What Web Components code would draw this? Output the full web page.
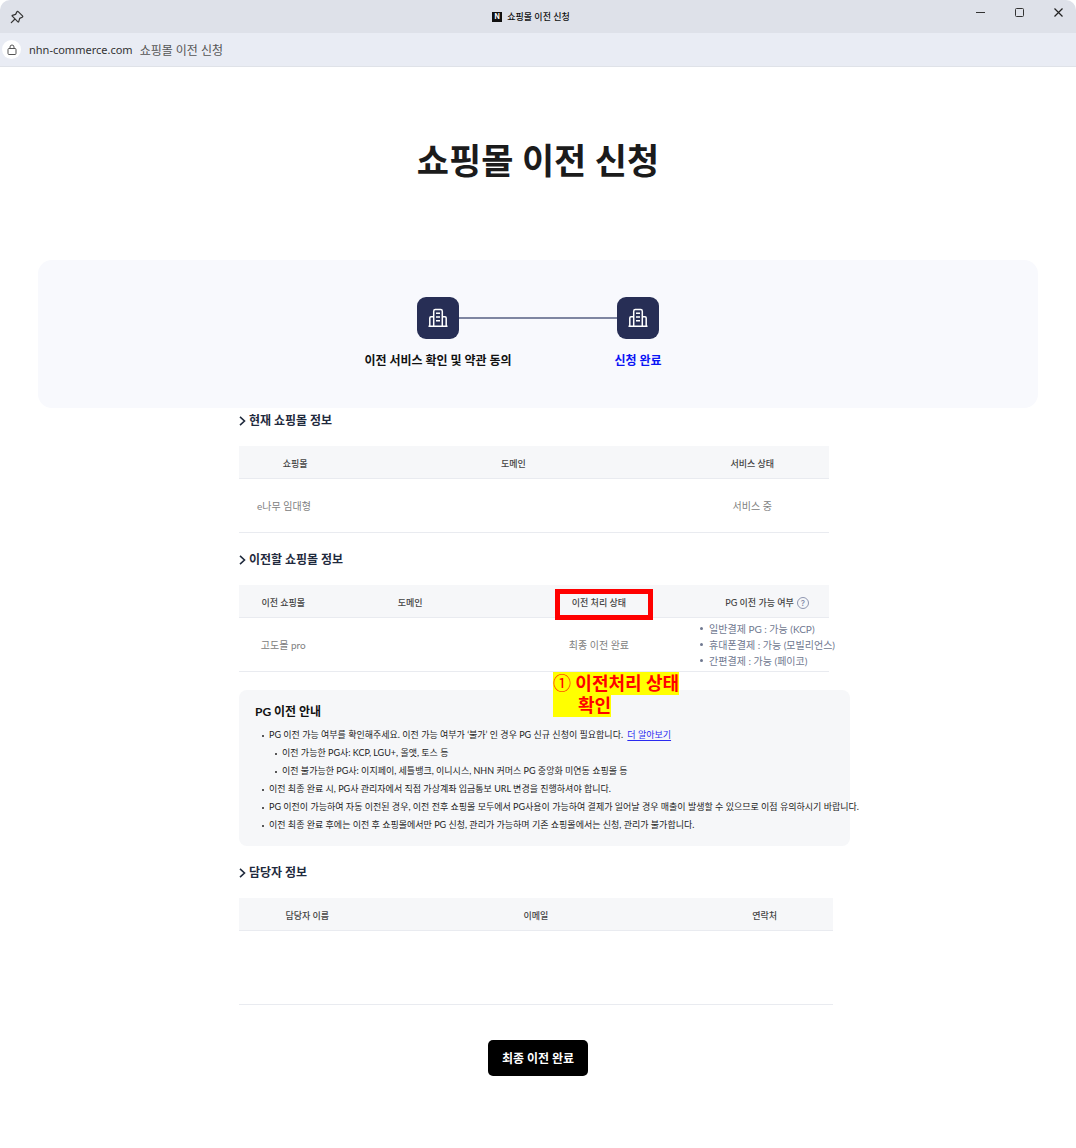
<!DOCTYPE html>
<html lang="ko">
<head>
  <meta charset="UTF-8">
  <meta name="viewport" content="width=device-width, initial-scale=1.0">
  <title>쇼핑몰 이전 신청</title>
  <style>
    body {
      margin: 0;
      background: #fff;
      color: #111;
      font-family: Lato, "Noto Sans CJK KR", sans-serif;
    }

    main {
      padding: 0 38px 72px;
    }

    h1 {
      margin: 0;
      padding: 66px 0 73px;
      font-size: 35px;
      line-height: 54px;
      font-weight: 700;
      text-align: center;
      color: #1b1b1b;
    }

    .content {
      max-width: 598px;
      margin: 0 auto;
    }
  </style>
</head>
<body>
  <window-bar>쇼핑몰 이전 신청</window-bar>
  <address-bar host="nhn-commerce.com">쇼핑몰 이전 신청</address-bar>

  <main>
    <h1>쇼핑몰 이전 신청</h1>

    <step-list>
      <step-item>이전 서비스 확인 및 약관 동의</step-item>
      <step-item current>신청 완료</step-item>
    </step-list>

    <div class="content">
      <info-section heading="현재 쇼핑몰 정보">
        <info-table lead widths="19,55,26" heads="쇼핑몰,도메인,서비스 상태" cells="e나무 임대형,,서비스 중"></info-table>
      </info-section>

      <info-section heading="이전할 쇼핑몰 정보">
        <info-table widths="15,28,36,21" heads="이전 쇼핑몰,도메인,이전 처리 상태,PG 이전 가능 여부" cells="고도몰 pro,,최종 이전 완료,">
          <help-button slot="head-4"></help-button>
          <pg-list slot="cell-4" items="일반결제 PG : 가능 (KCP)|휴대폰결제 : 가능 (모빌리언스)|간편결제 : 가능 (페이코)"></pg-list>
        </info-table>
        <check-mark number="①" first="이전처리 상태" second="확인"></check-mark>
      </info-section>

      <pg-notice></pg-notice>

      <info-section heading="담당자 정보">
        <info-table wide widths="23,54,23" heads="담당자 이름,이메일,연락처" cells=",,"></info-table>
      </info-section>

      <submit-button>최종 이전 완료</submit-button>
    </div>
  </main>

  <script>
    // Base class: every element clones its template in an open shadow root
    class BaseElement extends HTMLElement {
      constructor() {
        super();
        this.attachShadow({ mode: "open" });
      }

      render() {
        const template = document.createElement("template");
        template.innerHTML = `
          ${this.getStyles()}
          ${this.getTemplate()}
        `;
        this.shadowRoot.replaceChildren(template.content.cloneNode(true));
      }

      connectedCallback() {
        this.render();
      }
    }

    class WindowBar extends BaseElement {
      getTemplate() {
        return `
          <button class="pin" aria-label="고정">
            <svg width="16" height="16" viewBox="0 0 16 16" fill="none" stroke="#333" stroke-width="1.2" stroke-linejoin="round" stroke-linecap="round">
              <path d="M9.2 2.6 13.5 6.9Q14.2 7.7 13.2 8.2L10.7 9.4 9.7 12.7Q9.4 13.3 8.9 12.8L3.3 7.2Q2.8 6.7 3.4 6.4L6.6 5.4 7.9 2.9Q8.5 1.9 9.2 2.6ZM6 10 2.3 13.7"/>
            </svg>
          </button>
          <div class="title">
            <span class="logo">N</span>
            <span><slot></slot></span>
          </div>
          <div class="controls">
            <button aria-label="최소화"><svg width="11" height="11" viewBox="0 0 11 11" fill="none" stroke="#333"><path d="M1 5.5h9"/></svg></button>
            <button aria-label="최대화"><svg width="11" height="11" viewBox="0 0 11 11" fill="none" stroke="#333"><rect x="1.5" y="1.5" width="8" height="8" rx="1"/></svg></button>
            <button aria-label="닫기"><svg width="11" height="11" viewBox="0 0 11 11" fill="none" stroke="#222" stroke-width="1.2"><path d="M1.5 1.5l8 8M9.5 1.5l-8 8"/></svg></button>
          </div>
        `;
      }

      getStyles() {
        return `
          <style>
            :host {
              display: grid;
              grid-template-columns: 1fr auto 1fr;
              align-items: center;
              height: 33px;
              background: #dee1e9;
              border-radius: 10px 10px 0 0;
            }
            button {
              display: flex;
              padding: 0;
              border: 0;
              background: none;
            }
            .pin {
              margin-left: 9px;
              justify-self: start;
            }
            .title {
              display: flex;
              align-items: center;
              gap: 5px;
              padding-right: 14px;
              font-size: 9px;
              line-height: 14px;
              font-weight: 500;
            }
            .logo {
              width: 10px;
              height: 10px;
              background: #111;
              color: #fff;
              font: 700 7px/10px Inter, sans-serif;
              text-align: center;
            }
            .controls {
              display: flex;
              gap: 28px;
              justify-self: end;
              padding: 0 12px 8px 0;
            }
          </style>
        `;
      }
    }

    class AddressBar extends BaseElement {
      getTemplate() {
        return `
          <span class="lock">
            <svg width="10" height="12" viewBox="0 0 10 12" fill="none" stroke="#555">
              <rect x="1" y="4.5" width="8" height="6" rx="1"/>
              <path d="M3 4.5V3a2 2 0 0 1 4 0v1.5"/>
            </svg>
          </span>
          <span class="host">${this.getAttribute("host")}</span>
          <span><slot></slot></span>
        `;
      }

      getStyles() {
        return `
          <style>
            :host {
              display: flex;
              align-items: center;
              height: 33px;
              padding-left: 2px;
              border-bottom: 1px solid #dfe2e8;
              background: #e9ecf4;
              color: #555;
              font-size: 12px;
            }
            .lock {
              display: flex;
              align-items: center;
              justify-content: center;
              width: 19px;
              height: 19px;
              margin-right: 8px;
              border-radius: 50%;
              background: #fff;
            }
            .host {
              margin-right: 7px;
              color: #333;
              font-family: "Noto Sans", sans-serif;
              font-size: 11px;
            }
          </style>
        `;
      }
    }

    class StepList extends BaseElement {
      getTemplate() {
        return `<div class="line"></div><slot></slot>`;
      }

      getStyles() {
        return `
          <style>
            :host {
              display: flex;
              justify-content: center;
              position: relative;
              padding: 37px 0;
              border-radius: 14px;
              background: #f8f9fd;
            }
            /* connector that runs behind the two icons */
            .line {
              position: absolute;
              top: 57px;
              left: calc(50% - 100px);
              width: 200px;
              height: 2px;
              background: #7f86a1;
            }
          </style>
        `;
      }
    }

    class StepItem extends BaseElement {
      getTemplate() {
        return `
          <span class="icon">
            <svg width="20" height="20" viewBox="0 0 20 20" fill="none" stroke="#fff" stroke-width="1.5" stroke-linejoin="round">
              <path d="M.5 18.300h19M5.700 18V3.200Q5.700 1.600 7.300 1.600H12.700Q14.300 1.600 14.300 3.200V18M5.700 8.800H3Q1.800 8.800 1.800 10V18M14.300 8.800H17Q18.200 8.800 18.200 10V18"/>
              <path d="M8 5.300h4M8 9h4M8 12.700h4"/>
            </svg>
          </span>
          <span class="label"><slot></slot></span>
        `;
      }

      getStyles() {
        return `
          <style>
            :host {
              display: flex;
              flex-direction: column;
              align-items: center;
              position: relative;
              width: 200px;
              font-size: 12px;
              line-height: 20px;
              font-weight: 700;
              color: #111;
            }
            :host([current]) {
              color: #0a14f5;
            }
            .icon {
              display: flex;
              align-items: center;
              justify-content: center;
              width: 42px;
              height: 42px;
              margin-bottom: 12px;
              border-radius: 9px;
              background: #272e55;
            }
          </style>
        `;
      }
    }

    class InfoSection extends BaseElement {
      getTemplate() {
        return `
          <h2>
            <svg width="7" height="10" viewBox="0 0 7 10" fill="none" stroke="#1f2a3d" stroke-width="1.600"><path d="M1 .8 5.500 5 1 9.200"/></svg>
            ${this.getAttribute("heading")}
          </h2>
          <slot></slot>
        `;
      }

      getStyles() {
        return `
          <style>
            :host {
              display: block;
              position: relative;
              margin-bottom: 14px;
            }
            h2 {
              display: flex;
              align-items: center;
              gap: 3px;
              margin: 0 0 14px;
              padding-top: 2px;
              font-size: 12px;
              line-height: 22px;
              font-weight: 700;
              color: #1f2a3d;
            }
          </style>
        `;
      }
    }

    class InfoTable extends BaseElement {
      getTemplate() {
        const widths = this.getAttribute("widths").split(",");
        const heads = this.getAttribute("heads").split(",");
        const cells = this.getAttribute("cells").split(",");
        return `
          <table>
            <colgroup>${widths.map(w => `<col style="width: ${w}%">`).join("")}</colgroup>
            <thead>
              <tr>${heads.map((text, i) => `<th scope="col">${text}<slot name="head-${i + 1}"></slot></th>`).join("")}</tr>
            </thead>
            <tbody>
              <tr>${cells.map((text, i) => `<td>${text}<slot name="cell-${i + 1}"></slot></td>`).join("")}</tr>
            </tbody>
          </table>
        `;
      }

      getStyles() {
        return `
          <style>
            :host {
              --row: 53px;
              display: block;
              margin-right: 8px;
            }
            :host([wide]) {
              --row: 73px;
              margin-right: 4px;
            }
            table {
              width: 100%;
              table-layout: fixed;
              border-spacing: 0;
            }
            th, td {
              padding: 0;
              border-bottom: 1px solid #e9ebf0;
              text-align: center;
              white-space: nowrap;
            }
            th {
              height: 29px;
              padding-top: 3px;
              background: #f6f7f9;
              font-size: 9px;
              line-height: 16px;
              font-weight: 500;
              color: #444;
            }
            td {
              height: var(--row);
              font-size: 10px;
              line-height: 16px;
              color: #808080;
            }
            :host([lead]) td:first-child {
              padding-left: 18px;
              text-align: left;
            }
          </style>
        `;
      }
    }

    class HelpButton extends BaseElement {
      getTemplate() {
        return `<button aria-label="도움말">?</button>`;
      }

      getStyles() {
        return `
          <style>
            :host {
              display: inline-block;
              margin-left: 3px;
              vertical-align: middle;
            }
            button {
              display: block;
              width: 12px;
              height: 12px;
              padding: 0;
              border: 1px solid #8e96b0;
              border-radius: 50%;
              background: none;
              color: #8088a6;
              font: 500 8px/10px Inter, sans-serif;
            }
          </style>
        `;
      }
    }

    class PgList extends BaseElement {
      getTemplate() {
        const items = this.getAttribute("items").split("|");
        return `<ul>${items.map(item => `<li>${item}</li>`).join("")}</ul>`;
      }

      getStyles() {
        return `
          <style>
            :host {
              display: block;
            }
            ul {
              margin: 0 -10px 0 -5px;
              padding: 0;
              list-style: none;
              text-align: left;
              color: #6f7890;
            }
            li {
              display: flex;
              align-items: center;
            }
            li::before {
              content: "";
              width: 3px;
              height: 3px;
              margin-right: 6px;
              border-radius: 50%;
              background: #6f7890;
            }
          </style>
        `;
      }
    }

    // Red frame over the status column with its highlighted note below
    class CheckMark extends BaseElement {
      getTemplate() {
        return `
          <div class="frame"></div>
          <div class="note">
            <span><i>${this.getAttribute("number")}</i> ${this.getAttribute("first")}</span>
            <span class="second">${this.getAttribute("second")}</span>
          </div>
        `;
      }

      getStyles() {
        return `
          <style>
            :host {
              position: absolute;
              top: 42px;
              left: 314px;
            }
            .frame {
              box-sizing: border-box;
              width: 98px;
              height: 31px;
              margin: 0 0 52px 2px;
              border: 5px solid #f00;
            }
            .note {
              display: flex;
              flex-direction: column;
              align-items: flex-start;
              color: #f00;
              font-size: 18px;
              line-height: 20px;
              font-weight: 700;
              white-space: nowrap;
            }
            .note span {
              padding-bottom: 2px;
              background: #ff0;
            }
            .note .second {
              padding-left: 25px;
            }
            i {
              font-family: "Noto Sans CJK KR", sans-serif;
              font-style: normal;
              font-weight: 400;
            }
          </style>
        `;
      }
    }

    class PgNotice extends BaseElement {
      getTemplate() {
        return `
          <h3>PG 이전 안내</h3>
          <ul>
            <li>PG 이전 가능 여부를 확인해주세요. 이전 가능 여부가 ‘불가’ 인 경우 PG 신규 신청이 필요합니다. <a href="#">더 알아보기</a></li>
            <li class="sub">이전 가능한 PG사: KCP, LGU+, 올앳, 토스 등</li>
            <li class="sub">이전 불가능한 PG사: 이지페이, 세틀뱅크, 이니시스, NHN 커머스 PG 중앙화 미연동 쇼핑몰 등</li>
            <li>이전 최종 완료 시, PG사 관리자에서 직접 가상계좌 입금통보 URL 변경을 진행하셔야 합니다.</li>
            <li>PG 이전이 가능하여 자동 이전된 경우, 이전 전후 쇼핑몰 모두에서 PG사용이 가능하여 결제가 일어날 경우 매출이 발생할 수 있으므로 이점 유의하시기 바랍니다.</li>
            <li>이전 최종 완료 후에는 이전 후 쇼핑몰에서만 PG 신청, 관리가 가능하며 기존 쇼핑몰에서는 신청, 관리가 불가합니다.</li>
          </ul>
        `;
      }

      getStyles() {
        return `
          <style>
            :host {
              display: block;
              margin: 18px -13px 14px 0;
              padding: 12px 0 12px 16px;
              border-radius: 8px;
              background: #f6f7f9;
            }
            h3 {
              margin: 0 0 4px;
              font-size: 12px;
              line-height: 20px;
              font-weight: 700;
            }
            ul {
              margin: 0;
              padding: 0 0 0 7px;
              list-style: none;
              font-size: 9px;
              line-height: 18px;
              color: #222;
              white-space: nowrap;
            }
            li::before {
              content: "";
              display: inline-block;
              width: 2px;
              height: 2px;
              margin-right: 5px;
              border-radius: 50%;
              background: #222;
              vertical-align: middle;
            }
            .sub {
              padding-left: 13px;
            }
            a {
              margin-left: 2px;
              color: #2a2af0;
              text-underline-offset: 2px;
            }
          </style>
        `;
      }
    }

    class SubmitButton extends BaseElement {
      getTemplate() {
        return `<button type="button"><slot></slot></button>`;
      }

      getStyles() {
        return `
          <style>
            :host {
              display: flex;
              justify-content: center;
              padding-top: 21px;
            }
            button {
              padding: 9px 14px 7px;
              border: 0;
              border-radius: 5px;
              background: #000;
              color: #fff;
              font-family: inherit;
              font-size: 12px;
              line-height: 20px;
              font-weight: 700;
            }
          </style>
        `;
      }
    }

    customElements.define("window-bar", WindowBar);
    customElements.define("address-bar", AddressBar);
    customElements.define("step-list", StepList);
    customElements.define("step-item", StepItem);
    customElements.define("info-section", InfoSection);
    customElements.define("info-table", InfoTable);
    customElements.define("help-button", HelpButton);
    customElements.define("pg-list", PgList);
    customElements.define("check-mark", CheckMark);
    customElements.define("pg-notice", PgNotice);
    customElements.define("submit-button", SubmitButton);
  </script>
</body>
</html>
